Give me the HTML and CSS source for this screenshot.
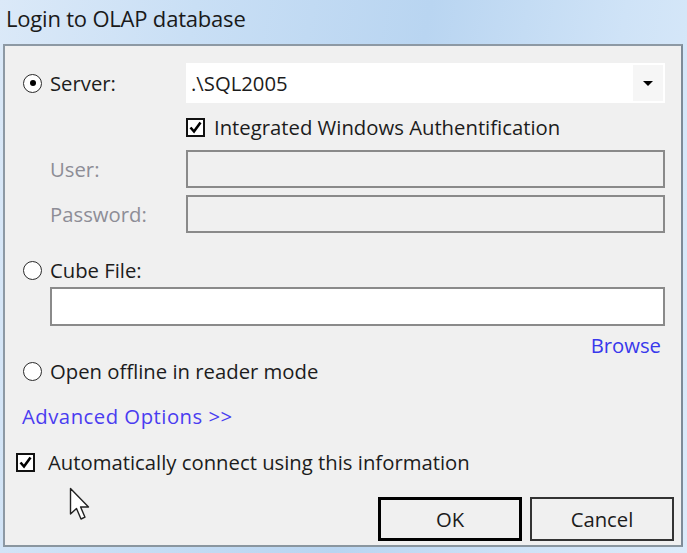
FILE: index.html
```html
<!DOCTYPE html>
<html>
<head>
<meta charset="utf-8">
<link rel="stylesheet" href="styles.css">
</head>
<body>
<div class="window">
  <div class="titlebar">Login to OLAP database</div>
  <div class="panel">
    <div class="row row-server">
      <div class="lead"><span class="radio checked"></span><span class="label">Server:</span></div>
      <div class="combo"><span class="combo-text">.\SQL2005</span><span class="combo-btn"><span class="arrow"></span></span></div>
    </div>
    <div class="row row-auth">
      <div class="lead"></div>
      <div class="check-line"><span class="checkbox"><svg viewBox="0 0 15 15" width="15" height="15"><path d="M2.5 7.5 L6 11.5 L12.5 2.5" fill="none" stroke="#000" stroke-width="2.6"/></svg></span><span class="label">Integrated Windows Authentification</span></div>
    </div>
    <div class="row row-user">
      <div class="lead"><span class="label disabled indent">User:</span></div>
      <div class="field disabled-field"></div>
    </div>
    <div class="row row-pass">
      <div class="lead"><span class="label disabled indent">Password:</span></div>
      <div class="field disabled-field"></div>
    </div>
    <div class="row row-cube">
      <span class="radio"></span><span class="label">Cube File:</span>
    </div>
    <div class="cube-input"></div>
    <div class="row row-browse"><span class="link">Browse</span></div>
    <div class="row row-offline">
      <span class="radio"></span><span class="label">Open offline in reader mode</span>
    </div>
    <div class="row row-adv"><span class="link">Advanced Options &gt;&gt;</span></div>
    <div class="row row-auto">
      <span class="checkbox"><svg viewBox="0 0 15 15" width="15" height="15"><path d="M2.5 7.5 L6 11.5 L12.5 2.5" fill="none" stroke="#000" stroke-width="2.6"/></svg></span><span class="label">Automatically connect using this information</span>
    </div>
    <div class="row row-buttons">
      <div class="btn btn-default">OK</div>
      <div class="btn">Cancel</div>
    </div>
  </div>
  <svg class="cursor" width="26" height="36" viewBox="0 0 26 36"><path d="M1.5 1.5 L1.5 27 L7.5 21.5 L12 32 L16 30.2 L11.6 20 L19.5 20 Z" fill="#fff" stroke="#222" stroke-width="1.4" stroke-linejoin="round"/></svg>
</div>
</body>
</html>
```

FILE: styles.css
```css
html, body {
  margin: 0;
  padding: 0;
}
body {
  width: 687px;
  height: 553px;
  overflow: hidden;
  background: #cfe3f7;
  font-family: "Open Sans", "Noto Sans", sans-serif;
  font-size: 20.3px;
  line-height: 24px;
  color: #1c1c1c;
}
.window {
  position: relative;
  width: 687px;
  height: 553px;
  display: flex;
  flex-direction: column;
  background: linear-gradient(100deg, #dbe9f8 0%, #c9dff5 25%, #b9d5f1 55%, #cfe3f7 80%, #dcebfa 100%);
}
.titlebar {
  height: 44px;
  box-sizing: border-box;
  padding: 5px 0 0 6px;
  font-size: 22px;
  line-height: 26px;
  color: #1a1a1a;
  letter-spacing: -0.2px;
}
.panel {
  margin: 0 4px 0 3px;
  height: 503px;
  box-sizing: border-box;
  border: 2px solid #8d99a4;
  border-right-color: #7e8b98;
  border-bottom-color: #8a969f;
  background: #f0f0f0;
  padding: 17px 16px 0 18px;
  display: flex;
  flex-direction: column;
}
.row {
  display: flex;
  align-items: center;
}
.lead {
  width: 163px;
  flex: none;
  display: flex;
  align-items: center;
  height: 100%;
}
.label {
  white-space: nowrap;
}
.label.disabled {
  color: #8d8d96;
}
.indent {
  margin-left: 27px;
}
.radio {
  width: 19px;
  height: 19px;
  box-sizing: border-box;
  border: 1.6px solid #2a2a2a;
  border-radius: 50%;
  background: #fff;
  flex: none;
  margin-right: 8px;
  display: flex;
  align-items: center;
  justify-content: center;
}
.radio.checked::after {
  content: "";
  width: 6px;
  height: 6px;
  border-radius: 50%;
  background: #000;
}
.checkbox {
  width: 19px;
  height: 19px;
  box-sizing: border-box;
  border: 2px solid #111;
  background: #fff;
  flex: none;
  display: flex;
  align-items: center;
  justify-content: center;
  margin-right: 9px;
}
.row-server {
  height: 40px;
}
.combo {
  width: 479px;
  height: 40px;
  background: #fff;
  display: flex;
  align-items: center;
  box-sizing: border-box;
  padding: 0 2px 0 5px;
}
.combo-text {
  flex: 1;
}
.combo-btn {
  width: 30px;
  height: 36px;
  background: #f6f6f6;
  display: flex;
  align-items: center;
  justify-content: center;
}
.arrow {
  width: 0;
  height: 0;
  border-left: 5px solid transparent;
  border-right: 5px solid transparent;
  border-top: 5px solid #000;
}
.row-auth {
  margin-top: 14px;
  height: 20px;
}
.check-line {
  display: flex;
  align-items: center;
}
.row-user {
  margin-top: 13px;
  height: 38px;
}
.row-pass {
  margin-top: 7px;
  height: 38px;
}
.field {
  width: 479px;
  height: 38px;
  box-sizing: border-box;
}
.disabled-field {
  border: 2px solid #8a8a8a;
  background: #f0f0f0;
}
.row-cube {
  margin-top: 25px;
  height: 24px;
}
.cube-input {
  margin: 5px 0 0 27px;
  height: 39px;
  box-sizing: border-box;
  border: 2px solid #8a8a8a;
  background: #fff;
}
.row-browse {
  margin-top: 9px;
  height: 20px;
  justify-content: flex-end;
  padding-right: 4px;
}
.link {
  color: #3838ec;
  white-space: nowrap;
}
.row-offline {
  margin-top: 4px;
  height: 24px;
}
.row-adv {
  margin-top: 21px;
  height: 24px;
  margin-left: -1px;
}
.row-adv .link {
  color: #4a3cf0;
  letter-spacing: 0.5px;
}
.row-auto {
  margin-top: 22px;
  height: 24px;
  margin-left: -7px;
}
.row-auto .checkbox {
  margin-right: 13px;
}
.row-buttons {
  margin-top: 23px;
  height: 44px;
  justify-content: flex-end;
  margin-right: -9px;
  gap: 8px;
}
.btn {
  width: 144px;
  height: 44px;
  box-sizing: border-box;
  border: 2px solid #333;
  display: flex;
  align-items: center;
  justify-content: center;
  padding-top: 0;
  background: #f0f0f0;
}
.btn-default {
  border: 3px solid #000;
}
.cursor {
  position: absolute;
  left: 69px;
  top: 487px;
}
```
